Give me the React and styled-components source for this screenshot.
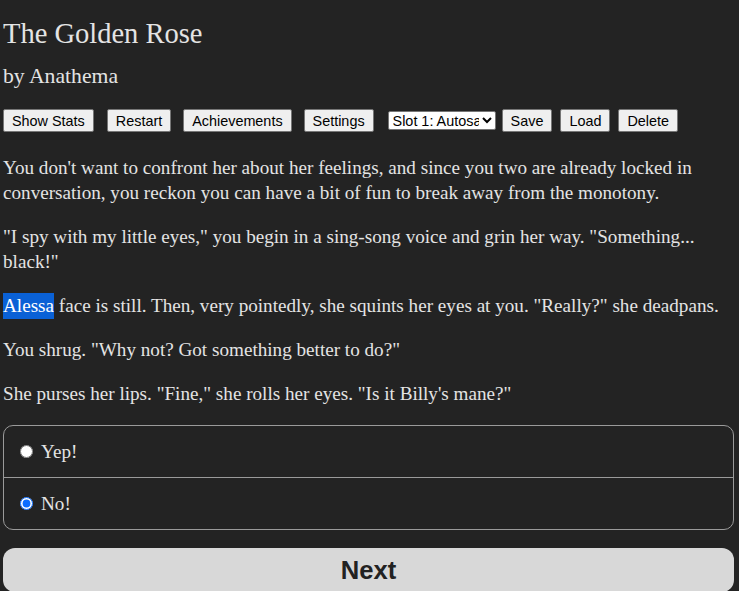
import React from "react";
import styled, { createGlobalStyle } from "styled-components";

const Global = createGlobalStyle`
  html, body { margin: 0; padding: 0; background: #232323; }
  body { overflow: hidden; }
`;

const Page = styled.div`
  padding: 0 5px 0 3px;
  color: #e4e4e4;
  font-family: "Liberation Serif", Georgia, serif;
  font-size: 19.15px;
`;

const Title = styled.h1`
  margin: 0;
  padding-top: 18px;
  font-size: 28.5px;
  font-weight: normal;
  line-height: 32px;
`;

const Author = styled.h2`
  margin: 0;
  padding-top: 14px;
  font-size: 21.7px;
  font-weight: normal;
  line-height: 24px;
`;

const Toolbar = styled.div`
  display: flex;
  align-items: center;
  margin-top: 21px;
`;

const Btn = styled.button`
  font-family: "Liberation Sans", Arial, sans-serif;
  font-size: 14.4px;
  height: 23px;
  padding: 0 8px;
  background: #efefef;
  color: #000;
  border: 1px solid #767676;
  border-radius: 2px;
  margin-right: ${(p) => p.$mr ?? 0}px;
`;

const Select = styled.select`
  font-family: "Liberation Sans", Arial, sans-serif;
  font-size: 14.4px;
  height: 19px;
  width: 108px;
  padding: 0;
  background: #fff;
  color: #000;
  border: 1px solid #767676;
  border-radius: 2px;
  margin-right: ${(p) => p.$mr ?? 0}px;
`;

const Text = styled.div`
  margin-top: 23px;
`;

const P = styled.p`
  margin: 0 0 19px;
  line-height: 25px;
`;

const Hl = styled.span`
  background: #0a61d6;
  color: #fff;
  padding: 2px 0 3px;
`;

const Choices = styled.fieldset`
  margin: 19px 0 0;
  padding: 0;
  border: 1px solid #9a9a9a;
  border-radius: 10px;
`;

const Option = styled.label`
  display: flex;
  align-items: center;
  height: 51px;
  padding-left: 15px;
  border-top: ${(p) => (p.$first ? "none" : "1px solid #9a9a9a")};
`;

const Radio = styled.input`
  margin: 0 8px 0 1px;
  width: 13px;
  height: 13px;
  accent-color: #0a6cff;
`;

const Next = styled.button`
  display: block;
  width: 100%;
  margin-top: 18px;
  height: 44px;
  background: #d8d8d8;
  color: #222;
  border: none;
  border-radius: 12px;
  font-family: "Liberation Sans", Arial, sans-serif;
  font-weight: bold;
  font-size: 25.6px;
`;

export default function App() {
  return (
    <>
      <Global />
      <Page>
        <Title>The Golden Rose</Title>
        <Author>by Anathema</Author>
        <Toolbar>
          <Btn $mr={13}>Show Stats</Btn>
          <Btn $mr={12}>Restart</Btn>
          <Btn $mr={12}>Achievements</Btn>
          <Btn $mr={14}>Settings</Btn>
          <Select $mr={6} defaultValue="a">
            <option value="a">Slot 1: Autosave</option>
          </Select>
          <Btn $mr={8}>Save</Btn>
          <Btn $mr={8}>Load</Btn>
          <Btn>Delete</Btn>
        </Toolbar>
        <Text>
          <P>
            You don't want to confront her about her feelings, and since you two are already locked in
            conversation, you reckon you can have a bit of fun to break away from the monotony.
          </P>
          <P>
            "I spy with my little eyes," you begin in a sing-song voice and grin her way. "Something...
            black!"
          </P>
          <P>
            <Hl>Alessa</Hl> face is still. Then, very pointedly, she squints her eyes at you. "Really?" she deadpans.
          </P>
          <P>You shrug. "Why not? Got something better to do?"</P>
          <P>She purses her lips. "Fine," she rolls her eyes. "Is it Billy's mane?"</P>
        </Text>
        <Choices>
          <Option $first>
            <Radio type="radio" name="c" />
            Yep!
          </Option>
          <Option>
            <Radio type="radio" name="c" defaultChecked />
            No!
          </Option>
        </Choices>
        <Next>Next</Next>
      </Page>
    </>
  );
}
